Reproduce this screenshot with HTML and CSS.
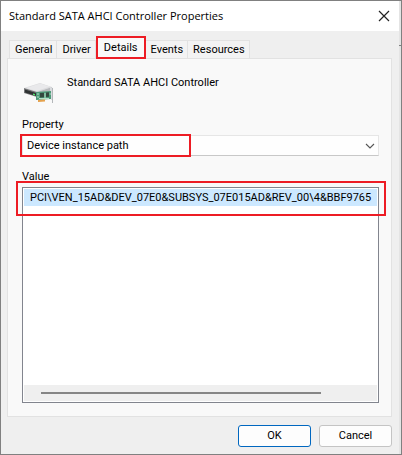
FILE: index.html
```html
<!DOCTYPE html>
<html lang="en">
<head>
<meta charset="utf-8">
<title>Standard SATA AHCI Controller Properties</title>
<link rel="stylesheet" href="styles.css">
</head>
<body>
<main class="dialog">
  <header class="titlebar">
    <h1>Standard SATA AHCI Controller Properties</h1>
    <button class="close" type="button" aria-label="Close">
      <svg width="12" height="12" viewBox="0 0 12 12"><path d="M1 1l10 10M11 1L1 11" stroke="#222" stroke-width="1.2" fill="none"/></svg>
    </button>
  </header>
  <div class="content">
    <div class="tabs" role="tablist">
      <button type="button" role="tab" class="tab">General</button>
      <button type="button" role="tab" class="tab">Driver</button>
      <button type="button" role="tab" class="tab active marked" aria-selected="true">Details</button>
      <button type="button" role="tab" class="tab">Events</button>
      <button type="button" role="tab" class="tab">Resources</button>
    </div>
    <section class="panel" role="tabpanel">
      <div class="device">
        <svg class="device-icon" width="32" height="24" viewBox="0 0 32 24" aria-hidden="true">
          <path d="M1 6L17 1l12 4-15 5z" fill="#dcdcde"/>
          <path d="M3 6L17 1.500l10 3-13 4.500z" fill="#e9e9eb"/>
          <path d="M1 6l13 4v5L1 11z" fill="#77787a"/>
          <path d="M2 7.500l11 3.500v3L2 10.500z" fill="#303333"/>
          <path d="M10 11.500l2 .6v1.400l-2-.6z" fill="#54e36c"/>
          <path d="M14 10l15-5v6l-15 3z" fill="#b8babd"/>
          <path d="M13 10l15-1v8l-15 1z" fill="#4d9a78"/>
          <path d="M17 11l4-.3v4.500l-4 .3zM23 10.500l3-.2v4.500l-3 .2z" fill="#34483f"/>
          <path d="M14 12h2M14 15h2M22 11v5M16 16.500h10M26.500 12h1.500" stroke="#b5dfc8" fill="none"/>
          <path d="M15 18l7-.5v2l-7 .5z" fill="#e5a14c"/>
          <path d="M27 5l3 1v15h-1v-3h-1V9h-1z" fill="#dadcdf"/>
          <path d="M29.500 6v15" stroke="#b4b7ba"/>
        </svg>
        <span>Standard SATA AHCI Controller</span>
      </div>
      <label class="caption" for="property">Property</label>
      <div class="combo marked">
        <select id="property"><option>Device instance path</option></select>
        <svg class="chevron" width="10" height="6" viewBox="0 0 10 6" aria-hidden="true"><path d="M1 1l4 4 4-4" stroke="#555" stroke-width="1.100" fill="none"/></svg>
      </div>
      <div class="caption value-caption" id="value-label">Value</div>
      <div class="value-box marked">
        <div class="list" role="listbox" aria-labelledby="value-label">
          <div class="item" role="option" aria-selected="true">PCI\VEN_15AD&amp;DEV_07E0&amp;SUBSYS_07E015AD&amp;REV_00\4&amp;BBF9765</div>
        </div>
        <div class="scrollbar"><div class="thumb"></div></div>
      </div>
    </section>
    <footer class="actions">
      <button type="button" class="action primary">OK</button>
      <button type="button" class="action">Cancel</button>
    </footer>
  </div>
</main>
</body>
</html>
```
FILE: styles.css
```css
*, *::after { box-sizing: border-box; }
body {
  margin: 0;
  color: #000;
  font: 11px/16px Roboto, "Noto Sans", sans-serif;
}
button, select { font: inherit; color: inherit; }
.dialog {
  display: flex;
  flex-direction: column;
  min-height: 100vh;
  border: 1px solid #808080;
  background: linear-gradient(#808080, #808080) right 44px / 2px 1px no-repeat, #e4e4e4;
  padding-right: 2px;
}
.titlebar {
  display: flex;
  align-items: center;
  justify-content: space-between;
  height: 30px;
  padding: 0 9px 0 8px;
  background: #fff;
}
h1 { margin: 0; font: 11px/16px "Open Sans", "Noto Sans", sans-serif; }
.close { display: flex; padding: 0; border: 0; background: none; }
.content {
  flex: 1;
  display: flex;
  flex-direction: column;
  padding: 7px 7px 7px 6px;
  background: #efefef;
}
.tabs { display: flex; align-items: flex-end; padding-left: 2px; }
.tab {
  height: 18px;
  padding: 0 4px 0 5px;
  border: 1px solid #e2e2e2;
  border-width: 1px 1px 0 0;
  background: #f3f3f3;
  line-height: 18px;
}
.tab:first-child { border-left-width: 1px; }
.tab.active { position: relative; height: 20px; padding: 0 8px; border: 0; background: #f9f9f9; }
.panel {
  flex: 1;
  display: flex;
  flex-direction: column;
  padding: 16px 12px 13px 14px;
  border: 1px solid #e2e2e2;
  background: #f9f9f9;
}
.device { display: flex; gap: 12px; height: 42px; padding-left: 1px; }
.device-icon { margin-top: 7px; }
.caption { display: block; height: 18px; }
.combo { position: relative; height: 21px; }
.combo select {
  display: block;
  width: 100%;
  height: 100%;
  padding: 0 4px;
  border: 1px solid #e6e6e6;
  border-bottom-color: #c8c8c8;
  background: #fefefe;
  appearance: none;
}
.chevron { position: absolute; right: 4px; top: 8px; }
.value-caption { margin-top: 13px; }
.value-box {
  position: relative;
  flex: 1;
  display: flex;
  flex-direction: column;
  padding: 1px;
  border: 1px solid #82858e;
  background: #fff;
}
.list { flex: 1; overflow: hidden; }
.item {
  height: 17px;
  padding-left: 6px;
  overflow: hidden;
  background: #cce8ff;
  line-height: 18px;
  white-space: nowrap;
}
.scrollbar { height: 16px; padding: 7px 56px 0 17px; background: #efefef; }
.thumb { height: 2px; background: #858585; }
.marked::after {
  content: "";
  position: absolute;
  border: 2px solid #ed1c24;
  pointer-events: none;
}
.tab.marked::after { inset: -2px 0 -1px 0; }
.combo.marked::after { inset: -1px auto -1px -2px; width: 171px; }
.value-box.marked::after { inset: -7px -8px auto -7px; height: 35px; }
.actions { display: flex; justify-content: flex-end; gap: 8px; margin-top: 8px; }
.action {
  width: 73px;
  height: 22px;
  padding: 0;
  border: 1px solid #c4c4c4;
  border-radius: 3px;
  background: #fdfdfd;
  line-height: 20px;
}
.action.primary { border-color: #0067c0; }
```
